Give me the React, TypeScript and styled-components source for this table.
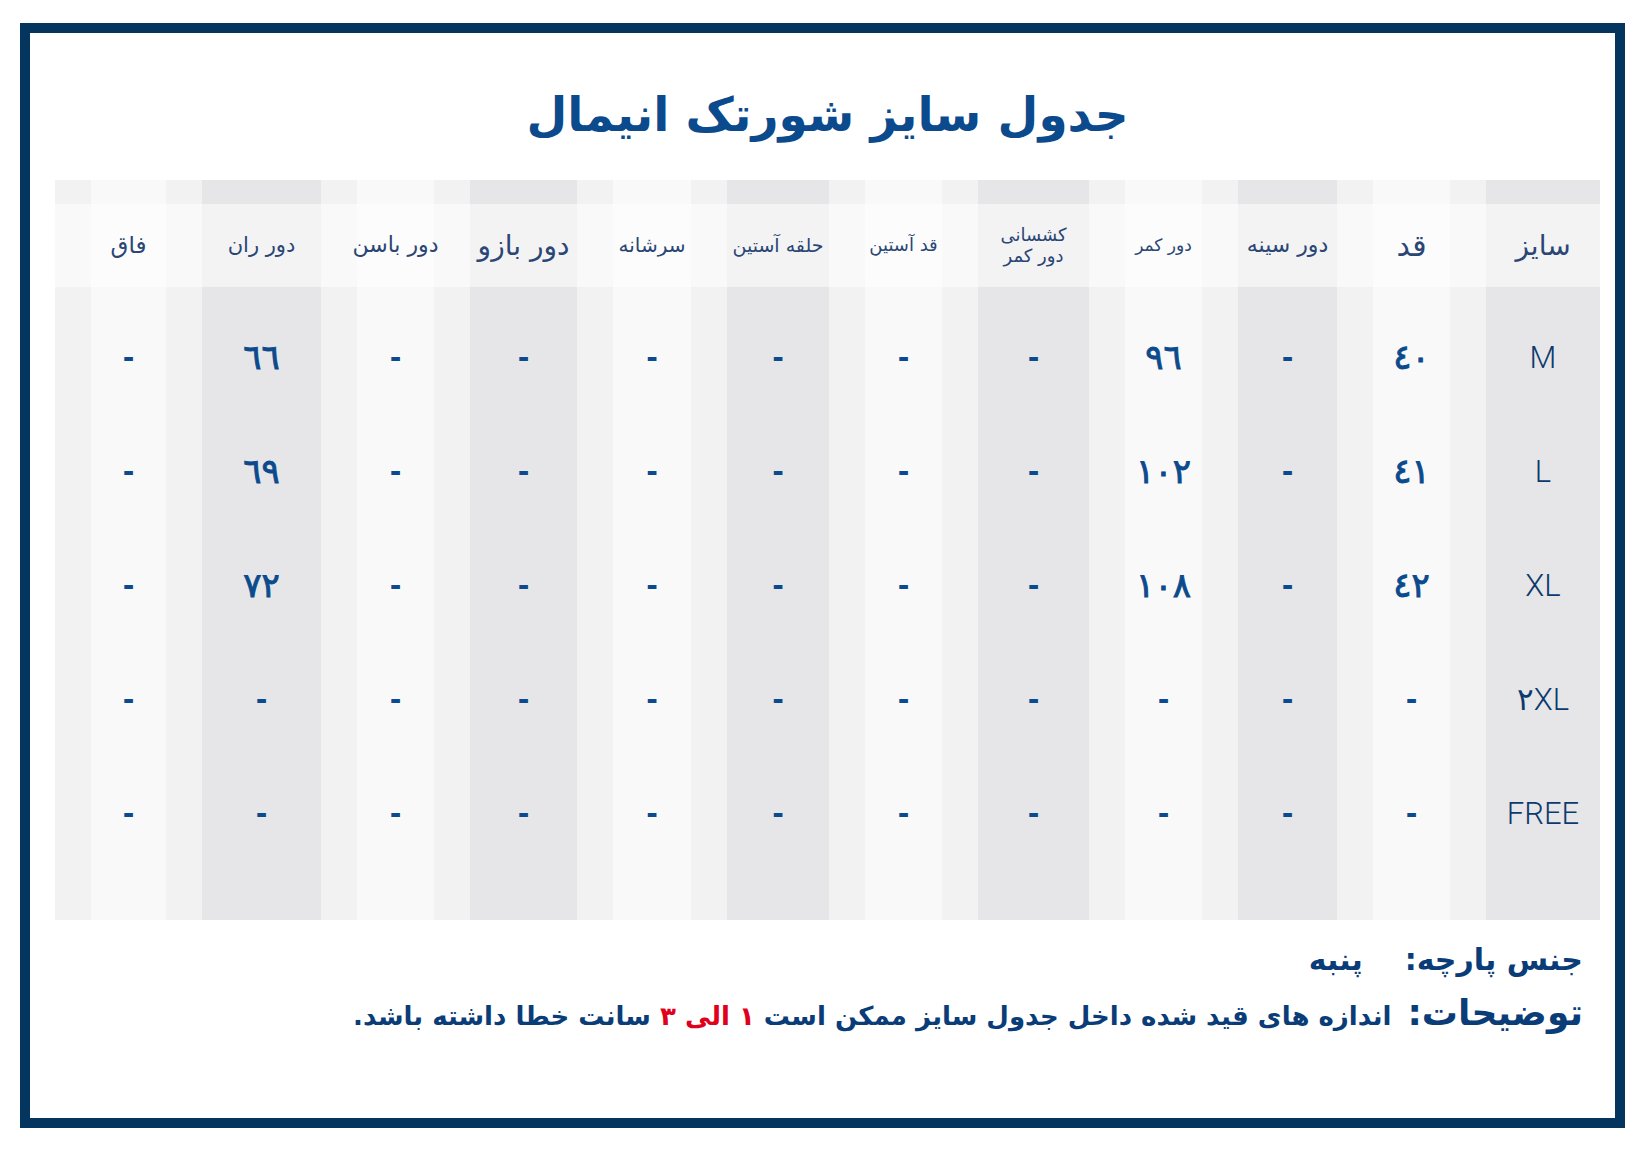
import React from 'react';
import styled, { createGlobalStyle } from 'styled-components';

const GlobalStyle = createGlobalStyle`
  html, body {
    margin: 0;
    padding: 0;
    background: #ffffff;
  }
  body {
    font-family: "DejaVu Sans", sans-serif;
  }
`;

type Col = { title: string; size: number; width: number; light: boolean; lines?: string[] };

const columns: Col[] = [
  { title: 'سایز', size: 28, width: 114, light: false },
  { title: 'قد', size: 30, width: 149, light: true },
  { title: 'دور سینه', size: 22, width: 99, light: false },
  { title: 'دور کمر', size: 17, width: 149, light: true },
  { title: 'کشسانی دور کمر', size: 18, width: 111, light: false, lines: ['کشسانی', 'دور کمر'] },
  { title: 'قد آستین', size: 18, width: 149, light: true },
  { title: 'حلقه آستین', size: 19, width: 102, light: false },
  { title: 'سرشانه', size: 20, width: 150, light: true },
  { title: 'دور بازو', size: 28, width: 107, light: false },
  { title: 'دور باسن', size: 22, width: 149, light: true },
  { title: 'دور ران', size: 21, width: 119, light: false },
  { title: 'فاق', size: 23, width: 147, light: true },
];

const rows: string[][] = [
  ['M', '٤٠', '-', '٩٦', '-', '-', '-', '-', '-', '-', '٦٦', '-'],
  ['L', '٤١', '-', '١٠٢', '-', '-', '-', '-', '-', '-', '٦٩', '-'],
  ['XL', '٤٢', '-', '١٠٨', '-', '-', '-', '-', '-', '-', '٧٢', '-'],
  ['٢XL', '-', '-', '-', '-', '-', '-', '-', '-', '-', '-', '-'],
  ['FREE', '-', '-', '-', '-', '-', '-', '-', '-', '-', '-', '-'],
];

function App() {
  return (
    <>
      <GlobalStyle />
      <Page>
        <Frame dir="rtl">
          <Title>جدول سایز شورتک انیمال</Title>

          <Table $cols={columns.map((c) => c.width + 'px').join(' ')}>
            {columns.map((c) => (
              <HeadCell key={c.title} $light={c.light}>
                <HeadLabel $size={c.size}>
                  {c.lines ? c.lines.map((l) => <span key={l}>{l}</span>) : c.title}
                </HeadLabel>
              </HeadCell>
            ))}

            {rows.map((row, r) =>
              row.map((v, i) => (
                <Cell key={r + '-' + i} $light={columns[i].light}>
                  {i === 0 ? (
                    <SizeName dir="ltr">{v}</SizeName>
                  ) : (
                    <Value $dash={v === '-'}>{v}</Value>
                  )}
                </Cell>
              ))
            )}

            {columns.map((c) => (
              <Filler key={'f' + c.title} $light={c.light} />
            ))}
          </Table>

          <Notes>
            <NoteLine>
              <NoteLabel>جنس پارچه:</NoteLabel>
              <FabricName>پنبه</FabricName>
            </NoteLine>
            <NoteLine>
              <NoteLabel $big>توضیحات:</NoteLabel>
              <NoteText>
                اندازه های قید شده داخل جدول سایز ممکن است <Red>١ الی ٣</Red> سانت خطا داشته باشد.
              </NoteText>
            </NoteLine>
          </Notes>
        </Frame>
      </Page>
    </>
  );
}

export default App;

const Page = styled.div`
  width: 1643px;
  height: 1151px;
  padding: 23px 18px 23px 20px;
  box-sizing: border-box;
`;

const Frame = styled.div`
  width: 1605px;
  height: 1105px;
  box-sizing: border-box;
  border: 10px solid #04355f;
  background: #ffffff;
  display: flex;
  flex-direction: column;
  align-items: center;
  padding: 0 15px 0 25px;
`;

const Title = styled.h1`
  margin: 42px 0 0;
  height: 105px;
  font-family: "DejaVu Sans", sans-serif;
  font-weight: 700;
  font-size: 47px;
  line-height: 80px;
  color: #0b4a8c;
`;

const Table = styled.div<{ $cols: string }>`
  width: 1545px;
  display: grid;
  grid-template-columns: ${(p) => p.$cols};
`;

const stripes = (light: boolean) =>
  light
    ? 'linear-gradient(to right, #f2f2f3 0 36px, #f9f9f9 36px calc(100% - 36px), #f2f2f3 calc(100% - 36px))'
    : '#e6e6e8';

const HeadCell = styled.div<{ $light: boolean }>`
  padding-top: 24px;
  background: ${(p) => stripes(p.$light)};
`;

const HeadLabel = styled.div<{ $size: number }>`
  height: 83px;
  background: rgba(255, 255, 255, 0.5);
  display: flex;
  flex-direction: column;
  align-items: center;
  justify-content: center;
  font-family: "DejaVu Sans", sans-serif;
  font-weight: 400;
  font-size: ${(p) => p.$size}px;
  line-height: 1.12;
  color: #2a4674;
  white-space: nowrap;
`;

const Cell = styled.div<{ $light: boolean }>`
  height: 114px;
  box-sizing: border-box;
  padding-top: 26px;
  display: flex;
  align-items: center;
  justify-content: center;
  background: ${(p) => stripes(p.$light)};
`;

const Filler = styled.div<{ $light: boolean }>`
  height: 63px;
  background: ${(p) => stripes(p.$light)};
`;

const SizeName = styled.span`
  font-family: Roboto, "DejaVu Sans", sans-serif;
  font-weight: 300;
  font-size: 31px;
  color: #0d3a6e;
`;

const Value = styled.span<{ $dash: boolean }>`
  font-family: "DejaVu Sans", sans-serif;
  font-weight: ${(p) => (p.$dash ? 700 : 400)};
  font-size: ${(p) => (p.$dash ? 28 : 34)}px;
  -webkit-text-stroke: ${(p) => (p.$dash ? 0 : 0.9)}px #0b4a8c;
  color: #0b4a8c;
`;

const Notes = styled.div`
  align-self: stretch;
  display: flex;
  flex-direction: column;
  padding: 22px 17px 0 0;
`;

const NoteLine = styled.div`
  display: flex;
  align-items: baseline;
  gap: 16px;
  height: 50px;
`;

const NoteLabel = styled.span<{ $big?: boolean }>`
  font-family: "DejaVu Sans", sans-serif;
  font-weight: 700;
  font-size: ${(p) => (p.$big ? 36 : 30)}px;
  color: #0a3d78;
`;

const FabricName = styled.span`
  margin-right: 26px;
  font-family: "DejaVu Sans", sans-serif;
  font-weight: 700;
  font-size: 30px;
  color: #0a3d78;
`;

const NoteText = styled.span`
  font-family: "DejaVu Sans", sans-serif;
  font-weight: 700;
  font-size: 26px;
  color: #0a3d78;
`;

const Red = styled.span`
  color: #e0001b;
`;
